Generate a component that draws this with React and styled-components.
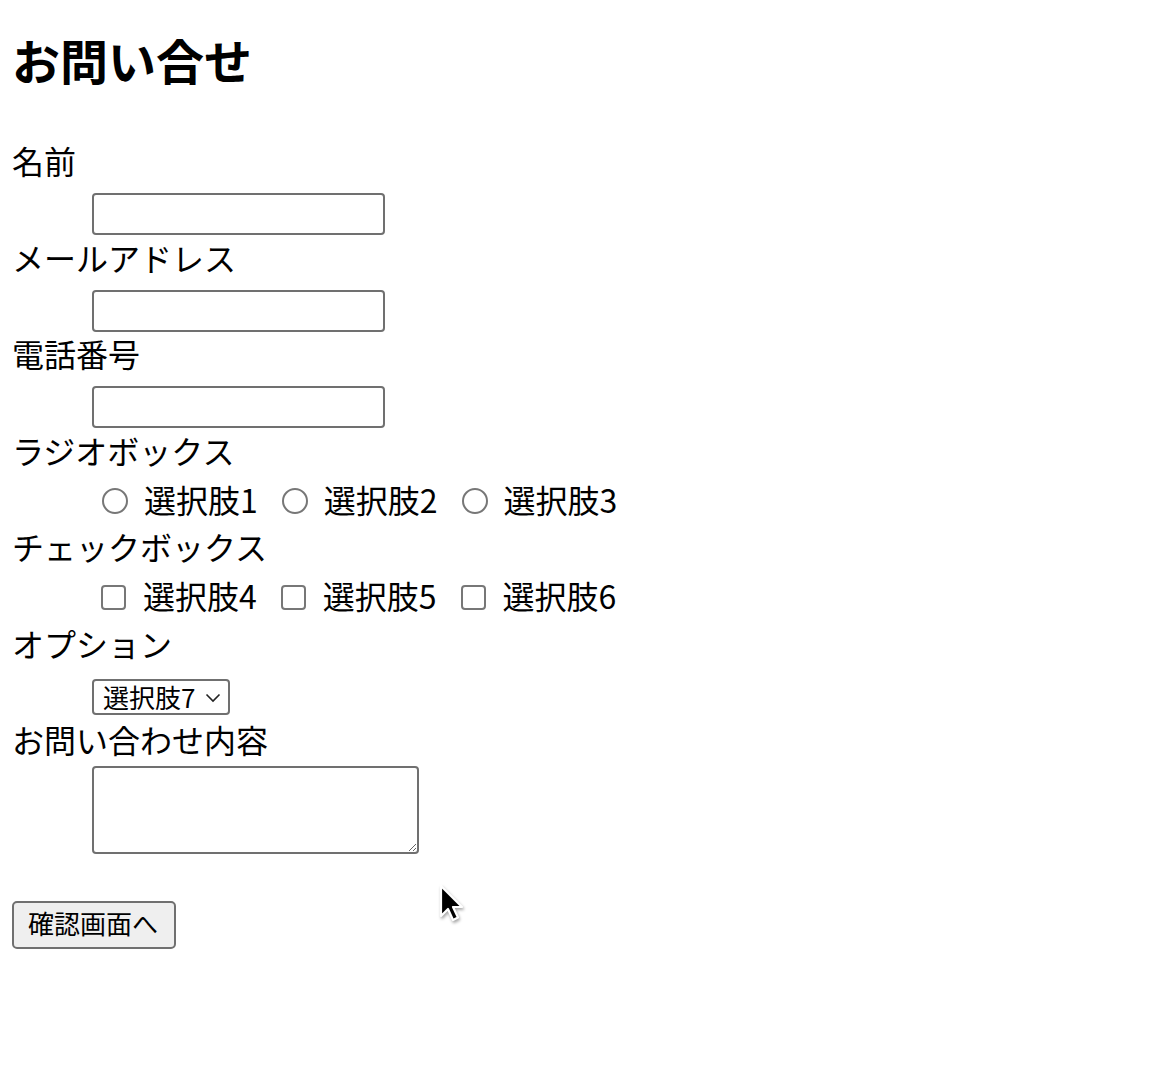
import React from 'react';
import styled, { createGlobalStyle } from 'styled-components';

const GlobalStyle = createGlobalStyle`
  body {
    margin: 0;
    background: #ffffff;
    color: #000000;
    font-family: 'Noto Sans CJK JP', 'Noto Sans', sans-serif;
  }
`;

const Page = styled.div`
  position: relative;
  min-height: 1066px;
  padding: 29px 0 0 12px;
  box-sizing: border-box;
`;

const Title = styled.h1`
  margin: 0 0 50px;
  font-size: 48px;
  line-height: 60px;
  font-weight: 700;
`;

const Label = styled.div`
  font-size: 32px;
  line-height: 42px;
  height: 48px;
`;

const Row = styled.div`
  height: 48.5px;
  padding-left: 80px;
  display: flex;
  align-items: ${(p) => (p.$top ? 'flex-start' : 'center')};
  padding-top: ${(p) => p.$top || 0}px;
  box-sizing: border-box;
`;

const TextInput = styled.input`
  width: 293px;
  height: 42px;
  box-sizing: border-box;
  border: 2px solid #707070;
  border-radius: 4px;
  padding: 0 6px;
  font-size: 24px;
  background: #fff;
`;

const Option = styled.label`
  display: flex;
  align-items: center;
  font-size: 32px;
  line-height: 42px;
  margin-right: ${(p) => p.$gap}px;
`;

const OptionText = styled.span`
  padding-bottom: 4px;
`;

const Radio = styled.input.attrs({ type: 'radio' })`
  appearance: none;
  width: 26px;
  height: 26px;
  margin: 0 16px 0 10px;
  border: 2px solid #777;
  border-radius: 50%;
  box-sizing: border-box;
  background: #fff;
`;

const Check = styled.input.attrs({ type: 'checkbox' })`
  appearance: none;
  width: 25px;
  height: 25px;
  margin: 0 17px 0 9px;
  border: 2px solid #777;
  border-radius: 4px;
  box-sizing: border-box;
  background: #fff;
`;

const SelectWrap = styled.div`
  position: relative;
  display: flex;
`;

const Select = styled.select`
  appearance: none;
  width: 138px;
  height: 36px;
  box-sizing: border-box;
  border: 2px solid #707070;
  border-radius: 4px;
  background: #fff;
  padding: 0 0 0 9px;
  font-family: inherit;
  font-size: 26px;
  line-height: 32px;
  color: #000;
`;

const Chevron = styled.svg`
  position: absolute;
  right: 9px;
  top: 14px;
  pointer-events: none;
`;

const TextArea = styled.textarea`
  width: 327px;
  height: 88px;
  box-sizing: border-box;
  border: 2px solid #707070;
  border-radius: 4px;
  background: #fff;
  margin: 0;
`;

const AreaRow = styled.div`
  padding-left: 80px;
  display: flex;
`;

const Submit = styled.button`
  margin-top: 47px;
  width: 164px;
  height: 48px;
  box-sizing: border-box;
  border: 2px solid #707070;
  border-radius: 5px;
  background: #efefef;
  font-family: inherit;
  font-size: 26px;
  line-height: 40px;
  padding: 0 0 4px 14px;
  text-align: left;
  color: #000;
`;

const Cursor = styled.svg`
  position: absolute;
  left: 438px;
  top: 884px;
  filter: drop-shadow(1px 2px 1.5px rgba(0, 0, 0, 0.35));
`;

const radios = ['選択肢1', '選択肢2', '選択肢3'];
const checks = ['選択肢4', '選択肢5', '選択肢6'];

export default function App() {
  return (
    <Page>
      <GlobalStyle />
      <Title>お問い合せ</Title>
      <form onSubmit={(e) => e.preventDefault()}>
        <Label>名前</Label>
        <Row $top={6}><TextInput type="text" /></Row>
        <Label>メールアドレス</Label>
        <Row $top={6}><TextInput type="email" /></Row>
        <Label>電話番号</Label>
        <Row $top={6}><TextInput type="tel" /></Row>

        <Label>ラジオボックス</Label>
        <Row>
          {radios.map((r) => (
            <Option key={r} $gap={14}>
              <Radio name="radio" value={r} />
              <OptionText>{r}</OptionText>
            </Option>
          ))}
        </Row>

        <Label>チェックボックス</Label>
        <Row>
          {checks.map((c) => (
            <Option key={c} $gap={15}>
              <Check name="check" value={c} />
              <OptionText>{c}</OptionText>
            </Option>
          ))}
        </Row>

        <Label>オプション</Label>
        <Row $top={9}>
          <SelectWrap>
            <Select defaultValue="選択肢7">
              <option>選択肢7</option>
              <option>選択肢8</option>
              <option>選択肢9</option>
            </Select>
            <Chevron width="16" height="10" viewBox="0 0 16 10">
              <path d="M1.5 1.5 L8 8 L14.5 1.5" fill="none" stroke="#222" strokeWidth="1.6" />
            </Chevron>
          </SelectWrap>
        </Row>

        <Label>お問い合わせ内容</Label>
        <AreaRow><TextArea /></AreaRow>

        <Submit type="submit">確認画面へ</Submit>
      </form>

      <Cursor width="26" height="40" viewBox="0 0 26 40">
        <path
          d="M3 2 L3 32 L10 25 L15 36 L20 33.5 L15 23 L24 23 Z"
          fill="#000"
          stroke="#fff"
          strokeWidth="2.2"
          strokeLinejoin="round"
        />
      </Cursor>
    </Page>
  );
}
